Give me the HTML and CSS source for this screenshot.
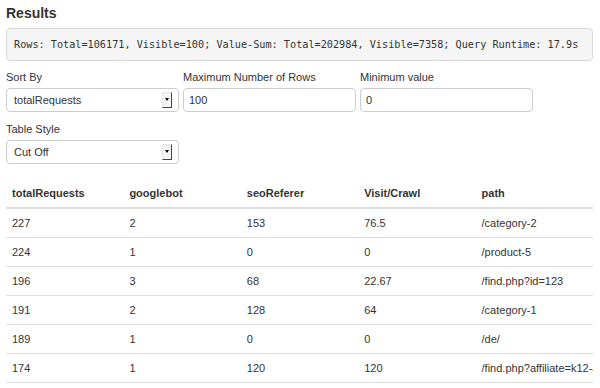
FILE: index.html
```html
<!DOCTYPE html>
<html lang="en">
<head>
<meta charset="UTF-8">
<title>Results</title>
<link rel="stylesheet" href="styles.css">
</head>
<body>
<div class="page">
    <h3 class="title">Results</h3>
    <pre class="summary">Rows: Total=106171, Visible=100; Value-Sum: Total=202984, Visible=7358; Query Runtime: 17.9s</pre>

    <div class="form-row">
        <div class="form-group">
            <label class="label">Sort By</label>
            <div class="select"><span>totalRequests</span><span class="select-arrow"></span></div>
        </div>
        <div class="form-group">
            <label class="label">Maximum Number of Rows</label>
            <div class="input">100</div>
        </div>
        <div class="form-group">
            <label class="label">Minimum value</label>
            <div class="input">0</div>
        </div>
    </div>
    <div class="form-row">
        <div class="form-group">
            <label class="label">Table Style</label>
            <div class="select"><span>Cut Off</span><span class="select-arrow"></span></div>
        </div>
    </div>

    <table class="results">
        <thead>
            <tr><th>totalRequests</th><th>googlebot</th><th>seoReferer</th><th>Visit/Crawl</th><th>path</th></tr>
        </thead>
        <tbody>
            <tr><td>227</td><td>2</td><td>153</td><td>76.5</td><td>/category-2</td></tr>
            <tr><td>224</td><td>1</td><td>0</td><td>0</td><td>/product-5</td></tr>
            <tr><td>196</td><td>3</td><td>68</td><td>22.67</td><td>/find.php?id=123</td></tr>
            <tr><td>191</td><td>2</td><td>128</td><td>64</td><td>/category-1</td></tr>
            <tr><td>189</td><td>1</td><td>0</td><td>0</td><td>/de/</td></tr>
            <tr><td>174</td><td>1</td><td>120</td><td>120</td><td>/find.php?affiliate=k12-abc</td></tr>
        </tbody>
    </table>
</div>
</body>
</html>
```

FILE: styles.css
```css
body {
    margin: 0;
    background-color: #fff;
    color: #333;
    font-family: "Liberation Sans", Arial, sans-serif;
    font-size: 11px;
}

.page {
    padding: 4px 7px 0 6px;
}

.title {
    margin: 0 0 6px 0;
    font-size: 14px;
    line-height: 18px;
    font-weight: bold;
}

.summary {
    margin: 0 0 9px 0;
    padding: 8px 7px;
    font-family: "DejaVu Sans Mono", monospace;
    font-size: 10.2px;
    line-height: 15px;
    background-color: #f5f5f5;
    border: 1px solid #d9d9d9;
    border-radius: 4px;
    white-space: nowrap;
    overflow: hidden;
}

.form-row {
    display: flex;
    gap: 4px;
}

.form-group {
    width: 173px;
    margin-bottom: 10px;
}

.label {
    display: block;
    line-height: 14px;
    margin-bottom: 4px;
}

.select,
.input {
    box-sizing: border-box;
    height: 24px;
    border: 1px solid #ccc;
    border-radius: 4px;
    background-color: #fff;
    display: flex;
    align-items: center;
}

.select {
    justify-content: space-between;
    padding: 0 6px 0 7px;
}

.input {
    padding: 0 5px;
}

.select-arrow {
    position: relative;
    box-sizing: border-box;
    width: 10px;
    height: 16px;
    background-color: #f4f4f4;
    border-top: 1px solid #e6e6e6;
    border-left: 1px solid #e6e6e6;
    border-right: 1px solid #444;
    border-bottom: 1px solid #444;
}

.select-arrow::after {
    content: "";
    position: absolute;
    left: 2px;
    top: 5px;
    border-left: 2px solid transparent;
    border-right: 2px solid transparent;
    border-top: 3px solid #000;
}

.results {
    width: 100%;
    margin-top: 5px;
    border-collapse: collapse;
    table-layout: fixed;
}

.results th,
.results td {
    padding: 6px;
    line-height: 16px;
    text-align: left;
    white-space: nowrap;
    overflow: hidden;
}

.results th {
    border-bottom: 2px solid #ddd;
}

.results td {
    border-bottom: 1px solid #ddd;
}
```
